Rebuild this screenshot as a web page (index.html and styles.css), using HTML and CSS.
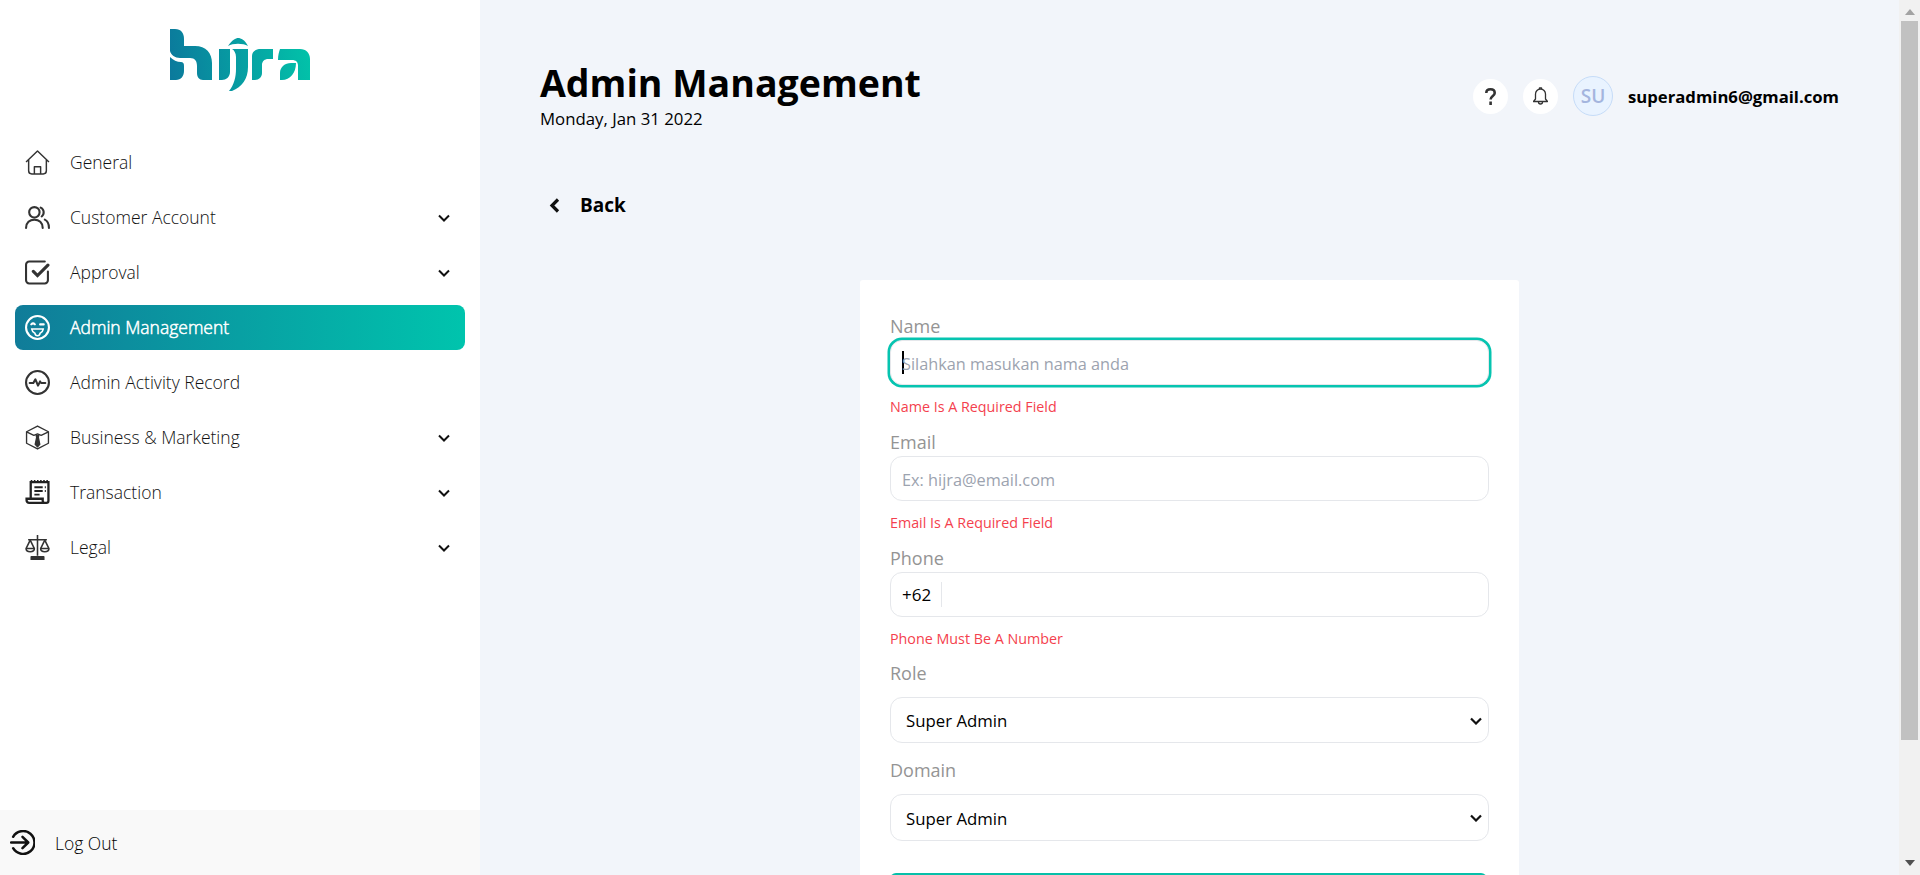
FILE: index.html
```html
<!DOCTYPE html>
<html lang="en">
<head>
    <meta charset="UTF-8">
    <title>Admin Management</title>
    <link rel="stylesheet" href="styles.css">
</head>
<body>
    <aside class="sidebar">
        <div class="logo">
            <svg width="140" height="62" viewBox="0 0 140 62">
                <defs>
                    <linearGradient id="logoGrad" gradientUnits="userSpaceOnUse" x1="0" y1="40" x2="140" y2="25">
                        <stop offset="0" stop-color="#0b7a9c"/>
                        <stop offset="1" stop-color="#02c2a9"/>
                    </linearGradient>
                </defs>
                <path fill="url(#logoGrad)" d="M0 0H5C11 0 14 4 14 10V17H25C36 17 42 24 42 34V51H33C29 51 27 48 27 44V37C27 32 25 29 20 29H10C5 29 1 26 0 22Z
                    M0 28C3 31 7 33 11 33C13 33 14 34 14 37V42C14 47 11 51 6 51H0Z
                    M49 20H60V43C60 48 56 51 52 51H49Z
                    M62 20H78V38C78 50 72 58 62 62H59C64 56 66 48 66 40V28C66 24 64 21 62 20Z
                    M58 17C62 11 66 9 68 9C71 9 75 11 78 17C73 14 63 14 58 17Z
                    M82 27C82 22 86 20 91 20H103V30H98C95 30 92 32 92 36V44C92 48 89 51 85 51H82Z
                    M110 20H130C136 20 140 24 140 30V51H128V37C128 33 126 31 122 31H108C108 26 109 23 110 20Z
                    M110 44C110 38 115 34 121 34H126C126 44 120 51 112 51H110Z"/>
            </svg>
        </div>
        <nav class="menu">
            <a class="menu-item">
                <svg class="menu-icon" viewBox="0 0 24 24" fill="none" stroke="#333" stroke-width="1.4" stroke-linejoin="round"><path d="M1 11.500 12 1l11 10.500M3.500 9.500V20a3 3 0 0 0 3 3h11a3 3 0 0 0 3-3V9.500"/><path d="M9 23v-7h6v7"/></svg>
                <span>General</span>
            </a>
            <a class="menu-item">
                <svg class="menu-icon" viewBox="0 0 24 24" fill="none" stroke="#333" stroke-width="2" stroke-linecap="round"><circle cx="9" cy="7" r="5"/><path d="M1 22c0-5 3.500-8 8-8s8 3 8 8"/><path d="M15 2.500a5 5 0 0 1 1 8.500M19 14c2.500 1.200 4 4 4 8"/></svg>
                <span>Customer Account</span>
                <svg class="chevron" viewBox="0 0 12 8"><path d="M1 1.500 6 6.500l5-5" fill="none" stroke="#111" stroke-width="2"/></svg>
            </a>
            <a class="menu-item">
                <svg class="menu-icon" viewBox="0 0 24 24" fill="none" stroke="#333" stroke-width="2" stroke-linecap="round"><path d="M22 11v8.500a3 3 0 0 1-3 3H4a3 3 0 0 1-3-3V4.500a3 3 0 0 1 3-3h15"/><path d="M8 11 12 15 22 5" stroke-width="3"/></svg>
                <span>Approval</span>
                <svg class="chevron" viewBox="0 0 12 8"><path d="M1 1.500 6 6.500l5-5" fill="none" stroke="#111" stroke-width="2"/></svg>
            </a>
            <a class="menu-item active">
                <svg class="menu-icon" viewBox="0 0 24 24" fill="none" stroke="#fff" stroke-width="2" stroke-linecap="round"><circle cx="12" cy="12" r="11"/><path d="M6 9c1-1 2.500-1 3.500 0M14.500 9h3.500"/><path d="M6.500 13.500h11c-.3 2-1.500 3.300-3 4-.3 2-.8 2.500-2.500 2.500s-2.200-.5-2.500-2.500c-1.500-.7-2.700-2-3-4Z" stroke-width="1.500"/></svg>
                <span>Admin Management</span>
            </a>
            <a class="menu-item">
                <svg class="menu-icon" viewBox="0 0 24 24" fill="none" stroke="#333" stroke-width="2" stroke-linecap="round" stroke-linejoin="round"><circle cx="12" cy="12" r="11"/><path d="M4.500 12.500H8l2-3.500 2.500 6 2-4 1 1.500h4"/></svg>
                <span>Admin Activity Record</span>
            </a>
            <a class="menu-item">
                <svg class="menu-icon" viewBox="0 0 24 24" fill="none" stroke="#333" stroke-width="1.300" stroke-linejoin="round"><path d="M12 1 22.500 6.500v11L12 23 1.500 17.500v-11Z"/><path d="M1.500 6.500l7 3.500M22.500 6.500l-7 3.500M8.500 10 12 8.500l3.500 1.500"/><path d="M10.800 10h2.400l-.4 2 1.400 6.500-2.200 2.500-2.200-2.500 1.400-6.500Z" fill="#333"/></svg>
                <span>Business &amp; Marketing</span>
                <svg class="chevron" viewBox="0 0 12 8"><path d="M1 1.500 6 6.500l5-5" fill="none" stroke="#111" stroke-width="2"/></svg>
            </a>
            <a class="menu-item">
                <svg class="menu-icon" viewBox="0 0 24 24" fill="none" stroke="#222" stroke-width="2.200"><path d="M5.500 18V2h17v18a2 2 0 0 1-2 2H4a2.500 2.500 0 0 1-2.500-2.500V18H17v2a2 2 0 0 0 2 2"/><path d="M9 7h8M9 10.500h8M9 14h5M19 7h1M19 10.500h1" stroke-width="1.800"/><path d="M5.500 1h17" stroke-dasharray="1.500 1.500"/></svg>
                <span>Transaction</span>
                <svg class="chevron" viewBox="0 0 12 8"><path d="M1 1.500 6 6.500l5-5" fill="none" stroke="#111" stroke-width="2"/></svg>
            </a>
            <a class="menu-item">
                <svg class="menu-icon" viewBox="0 0 24 24" fill="none" stroke="#333" stroke-width="1.500" stroke-linejoin="round"><path d="M12 0v20M3 4.500h18"/><path d="M5 5 1 13c0 4 8 4 8 0ZM19 5l-4 8c0 4 8 4 8 0Z"/><path d="M1 13h8M15 13h8"/><path d="M6 21h12v3H6Z" fill="#333"/></svg>
                <span>Legal</span>
                <svg class="chevron" viewBox="0 0 12 8"><path d="M1 1.500 6 6.500l5-5" fill="none" stroke="#111" stroke-width="2"/></svg>
            </a>
        </nav>
        <a class="logout">
            <svg class="menu-icon" viewBox="0 0 24 24" fill="none" stroke="#111" stroke-width="2.400" stroke-linecap="round" stroke-linejoin="round"><path d="M3 6.500A11 11 0 1 1 3 17.500"/><path d="M1 12h16M12 6.500 17.500 12 12 17.500"/></svg>
            <span>Log Out</span>
        </a>
    </aside>

    <main class="content">
        <header class="topbar">
            <div class="title-block">
                <h1>Admin Management</h1>
                <p class="date">Monday, Jan 31 2022</p>
            </div>
            <div class="user-block">
                <span class="round-btn"><svg width="11" height="17" viewBox="0 0 11 17" fill="none" stroke="#333" stroke-width="2.600"><path d="M1.300 5C1.300 2.800 3 1.300 5.500 1.300S9.700 2.800 9.700 5C9.700 8 5.600 8 5.600 11.500"/><path d="M5.600 13.500V17"/></svg></span>
                <span class="round-btn"><svg width="15" height="18" viewBox="0 0 15 18" fill="none" stroke="#333" stroke-width="1.300" stroke-linejoin="round"><path d="M2.500 12V7a5 5 0 0 1 10 0v5l2 2.500H.5Z"/><path d="M5.500 15a2 2 0 0 0 4 0M6.500 2V.8h2V2"/></svg></span>
                <span class="avatar">SU</span>
                <span class="user-email">superadmin6@gmail.com</span>
            </div>
        </header>

        <a class="back">
            <svg width="11" height="15" viewBox="0 0 11 15"><path d="M9 1.500 3 7.500l6 6" fill="none" stroke="#111" stroke-width="3.200"/></svg>
            <span>Back</span>
        </a>

        <form class="card">
            <label class="field-label">Name</label>
            <div class="input-box focused">
                <span class="caret"></span>
                <span class="placeholder">Silahkan masukan nama anda</span>
            </div>
            <p class="error">Name Is A Required Field</p>

            <label class="field-label">Email</label>
            <div class="input-box">
                <span class="placeholder">Ex: hijra@email.com</span>
            </div>
            <p class="error">Email Is A Required Field</p>

            <label class="field-label">Phone</label>
            <div class="input-box">
                <span class="prefix">+62</span>
            </div>
            <p class="error">Phone Must Be A Number</p>

            <label class="field-label">Role</label>
            <div class="select-box">
                <span>Super Admin</span>
                <svg width="12" height="8" viewBox="0 0 12 8"><path d="M1 1.500 6 6.500l5-5" fill="none" stroke="#111" stroke-width="2.200"/></svg>
            </div>

            <label class="field-label">Domain</label>
            <div class="select-box tall">
                <span>Super Admin</span>
                <svg width="12" height="8" viewBox="0 0 12 8"><path d="M1 1.500 6 6.500l5-5" fill="none" stroke="#111" stroke-width="2.200"/></svg>
            </div>

            <div class="submit"></div>
        </form>
    </main>

    <div class="scrollbar">
        <svg width="10" height="6" viewBox="0 0 10 6"><path d="M5 0 10 6H0Z" fill="#a3a3a3"/></svg>
        <div class="scroll-track"><div class="scroll-thumb"></div></div>
        <svg width="10" height="6" viewBox="0 0 10 6"><path d="M0 0H10L5 6Z" fill="#505050"/></svg>
    </div>
</body>
</html>
```

FILE: styles.css
```css
* {
    box-sizing: border-box;
}
body {
    margin: 0;
    height: 875px;
    display: flex;
    overflow: hidden;
    font-family: 'Open Sans', 'Noto Sans', sans-serif;
    background-color: #f2f5fa;
    color: #000;
}

/* sidebar */
.sidebar {
    width: 480px;
    flex: none;
    display: flex;
    flex-direction: column;
    background-color: #fff;
}
.logo {
    height: 135px;
    padding-top: 29px;
    display: flex;
    justify-content: center;
    flex: none;
}
.menu {
    flex: 1;
    display: flex;
    flex-direction: column;
    gap: 10px;
    padding: 5px 15px 0;
}
.menu-item {
    height: 45px;
    display: flex;
    align-items: center;
    padding: 0 15px 0 10px;
    border-radius: 8px;
    font-size: 17.500px;
    font-weight: 300;
    color: #111;
}
.menu-item span {
    flex: 1;
    margin-left: 20px;
    padding-bottom: 2px;
}
.menu-icon {
    width: 25px;
    height: 25px;
    flex: none;
}
.chevron {
    width: 12px;
    height: 8px;
    flex: none;
}
.menu-item.active {
    background: linear-gradient(90deg, #107c99 0%, #00c4ad 100%);
    color: #fff;
    -webkit-text-stroke: 0.500px #fff;
}
.logout {
    height: 65px;
    flex: none;
    display: flex;
    align-items: center;
    gap: 20px;
    padding-left: 10px;
    background-color: #f9f9f9;
    font-size: 17.500px;
    font-weight: 300;
}

/* main area */
.content {
    flex: 1;
    min-width: 0;
    overflow: hidden;
    padding: 0 60px;
}
.topbar {
    height: 185px;
    padding-top: 58px;
    display: flex;
    justify-content: space-between;
}
h1 {
    margin: 0;
    font-size: 37.500px;
    line-height: 50px;
    font-weight: 700;
}
.date {
    margin: 0;
    font-size: 16.800px;
    line-height: 22px;
}
.user-block {
    height: 40px;
    margin-top: 18px;
    display: flex;
    align-items: center;
}
.round-btn {
    width: 35px;
    height: 35px;
    margin-right: 15px;
    border-radius: 50%;
    background-color: #fff;
    display: flex;
    align-items: center;
    justify-content: center;
}
.avatar {
    width: 40px;
    height: 40px;
    border-radius: 50%;
    border: 1px solid #c6dcf8;
    background-color: #e9f3ff;
    color: #a4b5de;
    font-size: 19px;
    font-weight: 600;
    display: flex;
    align-items: center;
    justify-content: center;
}
.user-email {
    margin-left: 15px;
    font-size: 16.700px;
    font-weight: 700;
}
.back {
    display: flex;
    align-items: center;
    gap: 20px;
    height: 30px;
    margin: 5px 0 0 9px;
    font-size: 19px;
    font-weight: 700;
}

/* form */
.card {
    width: 659px;
    margin: 60px auto 0;
    padding: 34.400px 30px 40px;
    background-color: #fff;
    border-radius: 3px;
}
.field-label {
    display: block;
    height: 24px;
    line-height: 24px;
    font-size: 18px;
    color: #949494;
}
.input-box {
    height: 45px;
    margin-top: 2px;
    display: flex;
    align-items: center;
    padding: 0 11px;
    border: 1px solid #e5e7eb;
    border-radius: 12px;
    background-color: #fff;
}
.input-box.focused {
    box-shadow: 0 0 0 2.500px #06c4b0;
}
.placeholder {
    padding-top: 3px;
    font-size: 16.300px;
    color: #9ca3af;
}
.caret {
    width: 2px;
    height: 23px;
    margin-right: -2px;
    background-color: #000;
}
.prefix {
    height: 25px;
    line-height: 25px;
    padding-right: 10px;
    border-right: 1px solid #e5e7eb;
    font-size: 17px;
}
.error {
    margin: 0;
    height: 44.600px;
    padding-top: 12px;
    font-size: 14.300px;
    line-height: 20px;
    color: #f43f4e;
}
.select-box {
    height: 46px;
    margin: 12px 0 15px;
    display: flex;
    align-items: center;
    justify-content: space-between;
    padding: 1px 6px 0 15px;
    border: 1px solid #e5e7eb;
    border-radius: 12px;
    font-size: 16.800px;
}
.select-box.tall {
    height: 47px;
}
.submit {
    height: 60px;
    margin-top: 32px;
    width: 597px;
    background-color: #06bfa9;
    border-radius: 6px;
}

/* drawn scrollbar */
.scrollbar {
    width: 21px;
    flex: none;
    display: flex;
    flex-direction: column;
    align-items: center;
    justify-content: space-between;
    padding: 9px 0;
    background-color: #f1f1f1;
}
.scroll-track {
    flex: 1;
    width: 100%;
    padding: 6px 2px 0;
}
.scroll-thumb {
    height: 719px;
    background-color: #c1c1c1;
}
```
